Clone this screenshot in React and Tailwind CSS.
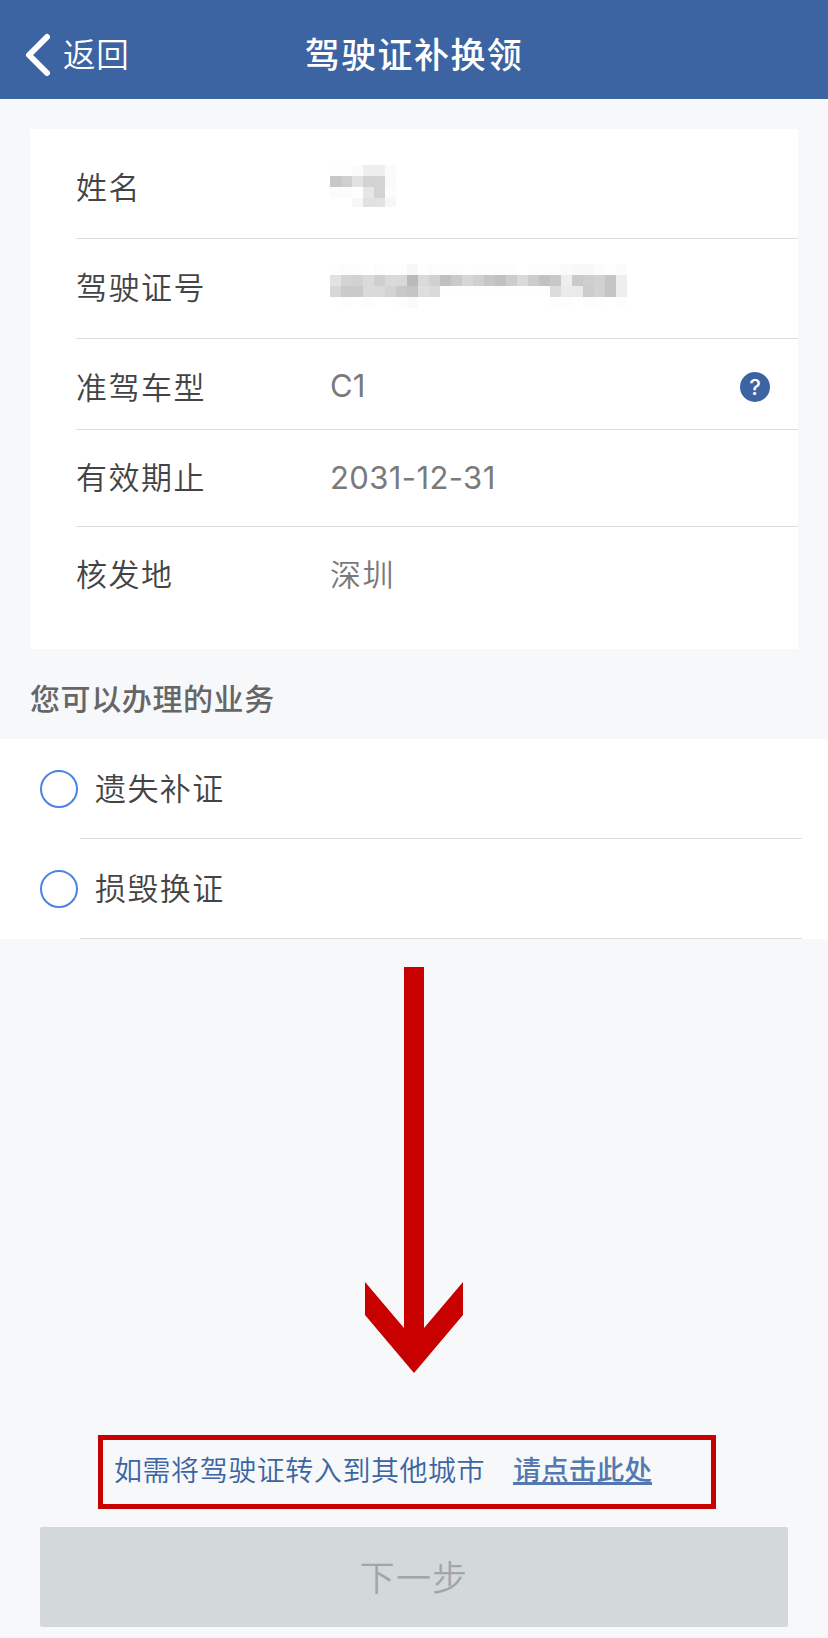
import React from 'react';

const NAME_CELLS = [
  ['#fefefe', '#fefefe', '#fbfbfb', '#eeeeee', '#eeeeee', '#fbfbfb'],
  ['#c7c7c7', '#cfcfcf', '#e2e2e2', '#d3d3d3', '#d4d4d4', '#fafafa'],
  ['#fcfcfc', '#fcfcfc', '#fefefe', '#e6e6e6', '#d3d3d3', '#fcfcfc'],
  ['#ffffff', '#ffffff', '#f7f7f7', '#e1e1e1', '#e2e2e2', '#f7f7f7'],
];

const NUMBER_CELLS = [
  ['#fefefe', '#fcfcfc', '#fdfdfd', '#fefefe', '#fcfcfc', '#fefefe', '#fdfdfd', '#f7f7f7', '#fefefe', '#fcfcfc', '#fdfdfd', '#fdfdfd', '#fefefe', '#fdfdfd', '#fdfdfd', '#fdfdfd', '#fdfdfd', '#ffffff', '#fdfdfd', '#fdfdfd', '#fcfcfc', '#fafafa', '#f8f8f8', '#f8f8f8', '#fcfcfc', '#fefefe', '#fbfbfb'],
  ['#e2e2e2', '#d3d3d3', '#d2d2d2', '#dadada', '#cfcfcf', '#dadada', '#d9d9d9', '#bababa', '#dadada', '#d1d1d1', '#c0c0c0', '#cacaca', '#d7d7d7', '#d0d0d0', '#c6c6c6', '#c1c1c1', '#cdcdcd', '#dadada', '#cccccc', '#c2c2c2', '#c8c8c8', '#eeeeee', '#cacaca', '#cecece', '#d2d2d2', '#c5c5c5', '#eeeeee'],
  ['#d7d7d7', '#cacaca', '#cacaca', '#dadada', '#dadada', '#d3d3d3', '#c8c8c8', '#c5c5c5', '#dedede', '#dadada', '#fefefe', '#fefefe', '#fefefe', '#fefefe', '#fefefe', '#fefefe', '#fefefe', '#fefefe', '#fefefe', '#fefefe', '#dcdcdc', '#ebebeb', '#eaeaea', '#cccccc', '#d2d2d2', '#c5c5c5', '#eeeeee'],
  ['#ffffff', '#fdfdfd', '#ffffff', '#fdfdfd', '#ffffff', '#ffffff', '#fdfdfd', '#fbfbfb', '#ffffff', '#ffffff', '#ffffff', '#ffffff', '#ffffff', '#ffffff', '#ffffff', '#ffffff', '#ffffff', '#ffffff', '#ffffff', '#ffffff', '#fdfdfd', '#fdfdfd', '#ffffff', '#fdfdfd', '#fefefe', '#ffffff', '#fdfdfd'],
];

const SERVICES = ['遗失补证', '损毁换证'];

export default function App() {
  return (
    <div className="w-[828px] h-[1638px] overflow-hidden flex flex-col bg-[#f6f8fa] font-['Inter','Noto_Sans_CJK_SC',sans-serif] font-[350]">
      <header className="h-[99px] shrink-0 bg-[#3c64a2] text-white grid grid-cols-3 items-center pt-[10px]">
        <button className="flex items-center pl-[25px] text-left">
          <svg width="26" height="44" viewBox="0 0 26 44" fill="none" stroke="#fff" strokeWidth="6" strokeLinecap="round" strokeLinejoin="round">
            <path d="M22 4 4 22l18 18" />
          </svg>
          <span className="ml-3 pt-1 text-[32.5px] leading-none tracking-[0.8px]">返回</span>
        </button>
        <h1 className="pt-[2px] text-center text-[35px] leading-none tracking-[1.4px] font-medium whitespace-nowrap">驾驶证补换领</h1>
      </header>

      <section className="mt-[30px] ml-[30px] w-[768px] h-[520px] shrink-0 bg-white pl-[46px]">
        <Row label="姓名" className="h-[110px] border-b pt-2">
          <Mosaic cells={NAME_CELLS} height={42} className="-mt-[3px]" />
        </Row>
        <Row label="驾驶证号" className="h-[100px] border-b pb-[2px]">
          <Mosaic cells={NUMBER_CELLS} height={44} className="-mt-[3px]" />
        </Row>
        <Row label="准驾车型" className="h-[91px] border-b pt-[6px]">
          <span className="-mt-1 font-normal">C1</span>
          <span className="ml-auto mr-7 -mt-px size-[30px] rounded-full bg-[#3c64a2] text-white text-[22px] leading-[30px] font-medium text-center">?</span>
        </Row>
        <Row label="有效期止" className="h-[97px] border-b pb-[2px]">
          <span className="font-normal tracking-[0.4px]">2031-12-31</span>
        </Row>
        <Row label="核发地" className="h-[97px] pb-[2px]">
          <span className="tracking-[1.4px]">深圳</span>
        </Row>
      </section>

      <h2 className="h-[90px] shrink-0 pt-[10px] pl-[30px] flex items-center text-[30px] leading-none tracking-[0.6px] font-medium text-[#666]">您可以办理的业务</h2>

      <ul className="h-[200px] shrink-0 bg-white">
        {SERVICES.map((name) => (
          <li key={name} className="flex h-[100px] pl-10">
            <span className="mt-[31px] size-[38px] shrink-0 rounded-full border-2 border-[#4a83e0]" />
            <span className="ml-[2px] w-[722px] border-b border-[#dcdcdc] pl-[15px] flex items-center text-[31px] leading-none tracking-[1.4px] text-[#444]">
              {name}
            </span>
          </li>
        ))}
      </ul>

      <svg className="mt-7 ml-[365px] shrink-0" width="98" height="406" viewBox="0 0 98 406" fill="#c90000">
        <path d="M39 0h20v361l39-46v33l-49 58L0 348v-33l39 46z" />
      </svg>

      <div className="mt-[62px] ml-[98px] w-[618px] h-[74px] shrink-0 border-5 border-[#c90000] flex items-center pl-[11px] pb-[2px] text-[28px] leading-none text-[#3c64a2]">
        <span className="tracking-[0.55px] whitespace-nowrap">如需将驾驶证转入到其他城市</span>
        <a href="#" className="ml-[28px] h-[28px] border-b-3 border-[#5578b0] text-[#5578b0] text-[27.8px] font-medium whitespace-nowrap">请点击此处</a>
      </div>

      <button className="mt-[18px] ml-10 w-[748px] h-[100px] shrink-0 rounded-[2px] bg-[#d3d8db] text-[#a3a6a9] text-[35px] leading-none tracking-[1.2px] pt-[2px]">
        下一步
      </button>
    </div>
  );
}

function Row({ label, className, children }) {
  return (
    <div className={`flex items-center border-[#dcdcdc] text-[31px] leading-none ${className}`}>
      <span className="w-[254px] shrink-0 tracking-[1.5px] text-[#444]">{label}</span>
      <div className="flex-1 flex items-center text-[#7a7a7a]">{children}</div>
    </div>
  );
}

function Mosaic({ cells, height, className }) {
  return (
    <svg className={className} width={cells[0].length * 11} height={height} shapeRendering="crispEdges">
      {cells.map((row, y) =>
        row.map((fill, x) => <rect key={`${x}-${y}`} x={x * 11} y={y * 11} width="11" height="11" fill={fill} />)
      )}
    </svg>
  );
}
